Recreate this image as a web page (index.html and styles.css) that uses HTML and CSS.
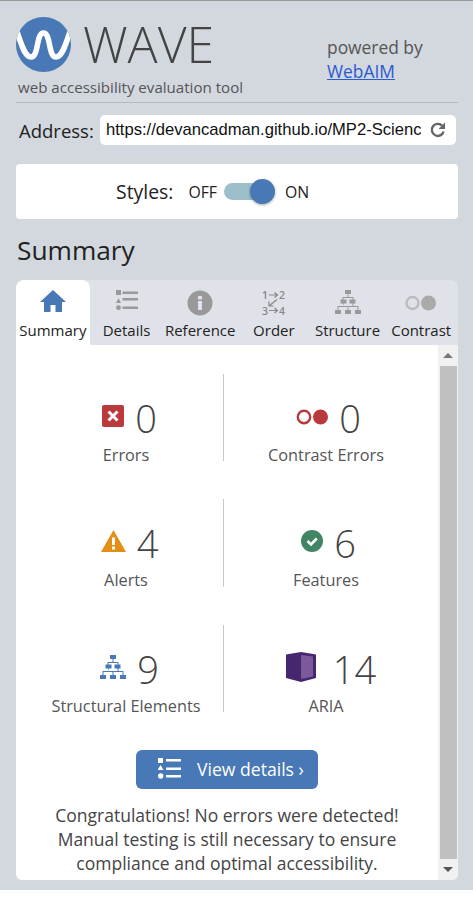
FILE: index.html

```html
<!DOCTYPE html>
<html lang="en">
<head>
  <meta charset="UTF-8" />
  <title>WAVE</title>
  <link rel="stylesheet" href="styles.css">
</head>
<body>
  <div class="sidebar">
    <header class="brand">
      <div class="brand-left">
        <div class="logo-row">
          <svg class="logo" viewBox="0 0 55 55" width="55" height="55">
            <defs><clipPath id="logoclip"><circle cx="27.5" cy="27.5" r="27.5"/></clipPath></defs>
            <circle cx="27.5" cy="27.5" r="27.5" fill="#4878b6"/>
            <path clip-path="url(#logoclip)" d="M0 12 C5 25 8 40 15 40 C23 40 20 16 27.500 16 C35 16 32 40 40 40 C47 40 50 25 55 12" fill="none" stroke="#fff" stroke-width="5.500"/>
          </svg>
          <span class="wordmark">WAVE</span>
        </div>
        <div class="tagline">web accessibility evaluation tool</div>
      </div>
      <div class="powered">powered by<br><a href="#">WebAIM</a></div>
    </header>

    <div class="address-row">
      <label class="address-label">Address:</label>
      <div class="address-box">
        <span class="address-url">https://devancadman.github.io/MP2-Science</span>
        <svg class="reload" viewBox="0 0 18 18" width="18" height="18">
          <path d="M14.6 10.5 A6 6 0 1 1 13.2 4.8" fill="none" stroke="#666" stroke-width="2.4"/>
          <path d="M16 1.6 V8 H9.6 Z" fill="#666"/>
        </svg>
      </div>
    </div>

    <div class="styles-card">
      <span class="styles-label">Styles:</span>
      <span class="toggle-text">OFF</span>
      <span class="toggle"><span class="toggle-knob"></span></span>
      <span class="toggle-text">ON</span>
    </div>

    <h1 class="title">Summary</h1>

    <div class="panel">
      <nav class="tabs">
        <div class="tab tab-active">
          <svg viewBox="0 0 26 22" width="26" height="22"><path d="M13 0 L26 12 H22 V22 H15.5 V15 H10.5 V22 H4 V12 H0 Z" fill="#4878b6"/></svg>
          <span>Summary</span>
        </div>
        <div class="tab">
          <svg viewBox="0 0 24 24" width="24" height="24" fill="#999">
            <rect x="1" y="0" width="5" height="5"/><path d="M3.500 8 L6 13 H1 Z"/><circle cx="3.500" cy="17.700" r="2.400"/>
            <rect x="7.500" y="1.500" width="15.500" height="2.500"/><rect x="7.500" y="8" width="15.500" height="2.500"/><rect x="7.500" y="16.500" width="15.500" height="2.500"/>
          </svg>
          <span>Details</span>
        </div>
        <div class="tab">
          <svg viewBox="0 0 26 26" width="26" height="26"><circle cx="13" cy="13" r="12.500" fill="#999"/><rect x="11" y="11" width="4" height="9" fill="#dfe2e8"/><rect x="11" y="6" width="4" height="3.500" fill="#dfe2e8"/></svg>
          <span>Reference</span>
        </div>
        <div class="tab">
          <svg class="order-icon" viewBox="0 0 24 26" width="24" height="26" fill="none" stroke="#888" stroke-width="1.200">
            <path d="M7 5 H15 M12.500 2.500 L15.500 5 L12.500 7.500 M15 9.500 L7 16 M7 11.500 V16 H11.500 M7 20.500 H15 M12.500 18 L15.500 20.500 L12.500 23"/>
            <text x="0" y="9" class="order-num">1</text><text x="17" y="9" class="order-num">2</text>
            <text x="0" y="24.500" class="order-num">3</text><text x="17" y="24.500" class="order-num">4</text>
          </svg>
          <span>Order</span>
        </div>
        <div class="tab">
          <svg viewBox="0 0 26 24" width="26" height="24" fill="#999">
            <rect x="10" y="0" width="6" height="4"/><rect x="5.500" y="9.500" width="6" height="4"/><rect x="14.500" y="9.500" width="6" height="4"/>
            <rect x="0" y="20" width="6" height="4"/><rect x="10" y="20" width="6" height="4"/><rect x="20" y="20" width="6" height="4"/>
            <path d="M12.500 4 h1 v3 h5 v3 h-1 v-2 h-9 v2 h-1 v-3 h5 Z M8 13 h1 v3 h4.500 v4 h-1 v-3 h-9 v3 h-1 v-4 h6.500 Z M17.500 13 h1 v3 h5 v4 h-1 v-3 h-9 v-1 h4 Z"/>
          </svg>
          <span>Structure</span>
        </div>
        <div class="tab">
          <svg class="contrast-icon" viewBox="0 0 32 16" width="32" height="16"><circle cx="7.500" cy="8" r="6" fill="none" stroke="#bbb" stroke-width="2.400"/><circle cx="23.500" cy="8" r="7.500" fill="#aaa"/></svg>
          <span>Contrast</span>
        </div>
      </nav>

      <div class="tab-body">
        <div class="summary">
          <div class="stats">
            <div class="stat">
              <div class="stat-top">
                <svg viewBox="0 0 22 22" width="22" height="22"><rect width="22" height="22" rx="2" fill="#b93a3c"/><path d="M6.500 6.500 L15.500 15.500 M15.500 6.500 L6.500 15.500" stroke="#fff" stroke-width="3"/></svg>
                <span class="stat-num">0</span>
              </div>
              <div class="stat-label">Errors</div>
            </div>
            <div class="stat">
              <div class="stat-top">
                <svg class="contrast-errors" viewBox="0 0 32 16" width="32" height="16"><circle cx="8" cy="8" r="6.200" fill="none" stroke="#b93a3c" stroke-width="2.400"/><circle cx="24.500" cy="8" r="7.500" fill="#b93a3c"/></svg>
                <span class="stat-num">0</span>
              </div>
              <div class="stat-label">Contrast Errors</div>
            </div>
            <div class="stat">
              <div class="stat-top">
                <svg viewBox="0 0 25 22" width="25" height="22"><path d="M12.500 0 L25 22 H0 Z" fill="#e38e15"/><rect x="11" y="7.500" width="3" height="7.500" fill="#fff"/><rect x="11" y="16.500" width="3" height="3" fill="#fff"/></svg>
                <span class="stat-num">4</span>
              </div>
              <div class="stat-label">Alerts</div>
            </div>
            <div class="stat">
              <div class="stat-top">
                <svg viewBox="0 0 22 22" width="22" height="22"><circle cx="11" cy="11" r="11" fill="#418565"/><path d="M6.500 11 L10 14.500 L15.800 8.500" fill="none" stroke="#fff" stroke-width="2.600"/></svg>
                <span class="stat-num">6</span>
              </div>
              <div class="stat-label">Features</div>
            </div>
            <div class="stat">
              <div class="stat-top">
                <svg viewBox="0 0 26 24" width="26" height="24" fill="#4878b6">
                  <rect x="10" y="0" width="6" height="4"/><rect x="5.500" y="9.500" width="6" height="4"/><rect x="14.500" y="9.500" width="6" height="4"/>
                  <rect x="0" y="20" width="6" height="4"/><rect x="10" y="20" width="6" height="4"/><rect x="20" y="20" width="6" height="4"/>
                  <path d="M12.500 4 h1 v3 h5 v3 h-1 v-2 h-9 v2 h-1 v-3 h5 Z M8 13 h1 v3 h4.500 v4 h-1 v-3 h-9 v3 h-1 v-4 h6.500 Z M17.500 13 h1 v3 h5 v4 h-1 v-3 h-9 v-1 h4 Z"/>
                </svg>
                <span class="stat-num">9</span>
              </div>
              <div class="stat-label">Structural Elements</div>
            </div>
            <div class="stat">
              <div class="stat-top stat-top-wide">
                <svg viewBox="0 0 30 30" width="30" height="30"><path d="M0 2.500 L15 0 L30 2.500 V26 L15 30 L0 26 Z" fill="#46266f"/><path d="M15 3 L27 4.500 V24.500 L15 27 Z" fill="#7a5a9b"/></svg>
                <span class="stat-num">14</span>
              </div>
              <div class="stat-label">ARIA</div>
            </div>
          </div>

          <a class="details-btn" href="#">
            <svg viewBox="0 0 23 21" width="23" height="21" fill="#fff">
              <rect x="0" y="0" width="5" height="5"/><path d="M2.500 7 L5.500 12 H-0.500 Z"/><circle cx="2.700" cy="18" r="2.700"/>
              <rect x="8" y="1" width="15" height="2.500"/><rect x="8" y="9.500" width="15" height="2.500"/><rect x="8" y="17" width="15" height="2.500"/>
            </svg>
            <span>View details ›</span>
          </a>

          <p class="congrats">Congratulations! No errors were detected! Manual testing is still necessary to ensure compliance and optimal accessibility.</p>
        </div>

        <div class="scrollbar">
          <div class="arrow arrow-up"></div>
          <div class="thumb"></div>
          <div class="arrow arrow-down"></div>
        </div>
      </div>
    </div>
  </div>
</body>
</html>
```

FILE: styles.css

```css
html {
  background: #fff;
}
body {
  margin: 0;
  font-family: "Open Sans", sans-serif;
  color: #444;
}
.sidebar {
  height: 890px;
  box-sizing: border-box;
  background: #d3d7de;
  border-top: 1px solid #999;
  padding: 16px 14px 0 16px;
}

/* header */
.brand {
  display: flex;
  height: 85px;
  border-bottom: 1px solid #b5b8bd;
  margin-right: 1px;
}
.brand-left {
  width: 311px;
}
.logo-row {
  display: flex;
  align-items: center;
  height: 55px;
}
.wordmark {
  font-family: "Open Sans", sans-serif;
  font-weight: 300;
  font-size: 50px;
  line-height: 55px;
  margin-left: 12px;
  color: #444;
}
.tagline {
  font-size: 15.100px;
  line-height: 20px;
  margin: 5px 0 0 2px;
  color: #555;
}
.powered {
  font-size: 17.400px;
  line-height: 24px;
  padding-top: 18px;
  color: #555;
}
.powered a {
  color: #2a5bd0;
}

.address-row {
  display: flex;
  align-items: center;
  margin-top: 12px;
}
.address-label {
  font-size: 18.500px;
  color: #222;
  margin-left: 3px;
  width: 81px;
}
.address-box {
  display: flex;
  align-items: center;
  width: 356px;
  height: 30px;
  background: #fff;
  border-radius: 5px;
  padding-left: 6px;
  box-sizing: border-box;
}
.address-url {
  font-family: "Liberation Sans", sans-serif;
  font-size: 16.600px;
  color: #111;
  width: 315px;
  overflow: hidden;
  white-space: nowrap;
}
.reload {
  margin-left: 8px;
}

.styles-card {
  display: flex;
  align-items: center;
  height: 55px;
  margin-top: 19px;
  margin-right: 1px;
  background: #fff;
  border-radius: 4px;
  padding-left: 100px;
  color: #222;
}
.styles-label {
  font-size: 19.400px;
  margin-right: 15px;
}
.toggle-text {
  font-size: 15.800px;
}
.toggle {
  position: relative;
  width: 50px;
  height: 17px;
  margin: 0 11px 0 7px;
  background: #9cbfca;
  border-radius: 9px;
}
.toggle-knob {
  position: absolute;
  right: -1px;
  top: -4px;
  width: 25px;
  height: 25px;
  background: #4878b6;
  border-radius: 50%;
  box-shadow: 0 1px 3px rgba(0,0,0,0.35);
}

.title {
  font-weight: 400;
  font-size: 26.300px;
  line-height: 32px;
  margin: 15px 0 14px 1px;
  color: #222;
}

/* tabs */
.panel {
  margin-right: 1px;
}
.tabs {
  display: flex;
  height: 65px;
  background: #dfe2e8;
  border-radius: 8px 8px 0 0;
}
.tab {
  flex: 1;
  display: flex;
  flex-direction: column;
  align-items: center;
  justify-content: space-between;
  box-sizing: border-box;
  height: 65px;
  padding: 10px 0 5px;
  font-size: 15px;
  line-height: 20px;
  color: #222;
  white-space: nowrap;
}
.tab-active {
  background: #fff;
  border-radius: 8px 8px 0 0;
}
.contrast-icon {
  margin-top: 5px;
}
.order-icon {
  overflow: visible;
}
.order-num {
  font-family: "Open Sans", sans-serif;
  font-size: 10.500px;
  font-weight: 600;
  fill: #888;
  stroke: none;
}

.tab-body {
  display: flex;
  height: 535px;
  background: #fff;
  border-radius: 0 0 6px 6px;
  overflow: hidden;
}
.summary {
  width: 422px;
  flex: none;
}
.stats {
  display: grid;
  grid-template-columns: 207px 215px;
  grid-template-rows: 87px 88px 87px;
  row-gap: 38px;
  padding-top: 29px;
}
.stat {
  display: flex;
  flex-direction: column;
  align-items: center;
  box-sizing: border-box;
  padding-top: 17px;
  padding-right: 9px;
}
.stat:nth-child(odd) {
  border-right: 1px solid #c8c8c8;
  width: 208px;
  padding-right: 0;
  padding-left: 13px;
}
.stat-top {
  display: flex;
  align-items: center;
  gap: 11px;
  height: 54px;
  margin-left: 5px;
}
.stat:nth-child(odd) .stat-top {
  margin-left: 7px;
}
.stat-top svg {
  margin-top: -4px;
}
.stat-top .contrast-errors {
  margin-top: -2px;
}
.stat-top-wide {
  gap: 17px;
  margin-left: 10px;
}
.stat-num {
  font-size: 38px;
  font-weight: 300;
  line-height: 54px;
  color: #444;
}
.stat-label {
  font-size: 16.300px;
  line-height: 22px;
  margin-top: -1px;
  color: #555;
  white-space: nowrap;
}

.details-btn {
  display: flex;
  align-items: center;
  gap: 16px;
  box-sizing: border-box;
  width: 182px;
  height: 39px;
  margin: 38px auto 0;
  padding-left: 22px;
  background: #4878b6;
  border-radius: 6px;
  color: #fff;
  font-size: 17.600px;
  text-decoration: none;
}
.details-btn svg {
  margin-top: -2px;
}
.details-btn span {
  margin-top: -2px;
}
.congrats {
  margin: 14px 20px 0;
  font-size: 17.500px;
  line-height: 24px;
  text-align: center;
  color: #444;
}

/* scrollbar */
.scrollbar {
  display: flex;
  flex-direction: column;
  align-items: center;
  width: 21px;
  background: #f1f1f1;
}
.thumb {
  flex: 1;
  width: 17px;
  background: #c0c0c0;
}
.arrow {
  width: 0;
  height: 0;
  margin: 8px 0;
  border-left: 5px solid transparent;
  border-right: 5px solid transparent;
}
.arrow-up {
  border-bottom: 5px solid #777;
}
.arrow-down {
  border-top: 5px solid #555;
}
```
